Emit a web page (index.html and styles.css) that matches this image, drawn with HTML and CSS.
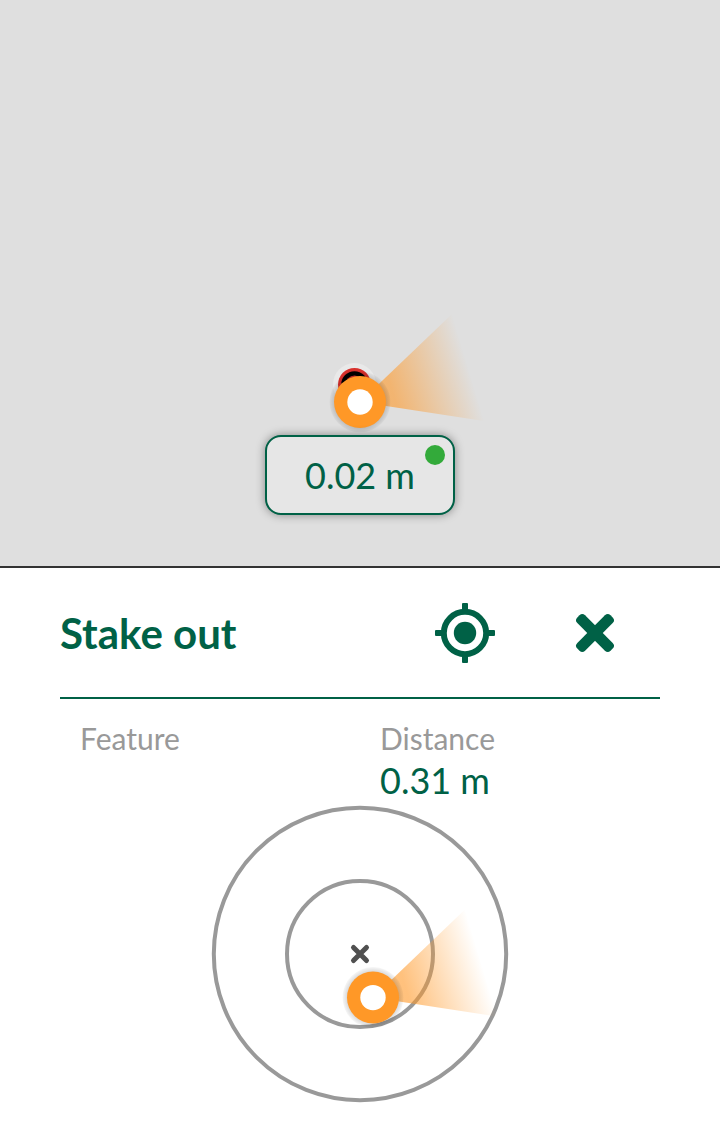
FILE: index.html
```html
<!DOCTYPE html>
<html lang="en">
<head>
<meta charset="utf-8">
<meta name="viewport" content="width=device-width, initial-scale=1">
<title>Stake out</title>
<link rel="stylesheet" href="styles.css">
</head>
<body>
<svg class="defs" aria-hidden="true">
  <defs>
    <linearGradient id="beam-fade" gradientUnits="userSpaceOnUse" x1="0" y1="0" x2="109" y2="-33">
      <stop offset="0.3" stop-color="#ff9827" stop-opacity="0.6"/>
      <stop offset="1" stop-color="#ff9827" stop-opacity="0"/>
    </linearGradient>
    <radialGradient id="marker-shadow">
      <stop offset="0.8" stop-color="#000" stop-opacity="0.18"/>
      <stop offset="1" stop-color="#000" stop-opacity="0.03"/>
    </radialGradient>
    <g id="position-marker">
      <path d="M0 0L92-88L124 19Z" fill="url(#beam-fade)"/>
      <circle r="30.5" fill="url(#marker-shadow)"/>
      <circle r="26" fill="#ff9827"/>
      <circle r="12.7" fill="#fff"/>
    </g>
  </defs>
</svg>
<main class="app">
  <section class="map" aria-label="Map">
    <svg class="map-position" viewBox="-130 -130 260 260" aria-hidden="true">
      <circle cx="-5.5" cy="-17.5" r="21.5" fill="#e9e9e9"/>
      <circle cx="-5.5" cy="-17.5" r="16.5" fill="#d8302c"/>
      <circle cx="-5.5" cy="-17.5" r="13.3" fill="#000"/>
      <circle cx="-5.5" cy="-17.5" r="9" fill="#d8302c"/>
      <use href="#position-marker"/>
    </svg>
    <div class="accuracy">
      <span class="accuracy-value">0.02 m</span>
      <span class="accuracy-dot"></span>
    </div>
  </section>
  <section class="panel">
    <header class="panel-header">
      <h1 class="title">Stake out</h1>
      <button class="icon-button" type="button" aria-label="Centre on position">
        <svg class="icon" viewBox="0 0 60 60" aria-hidden="true">
          <circle cx="30" cy="30" r="21.2" fill="none" stroke="#006146" stroke-width="6"/>
          <circle cx="30" cy="30" r="11.2" fill="#006146"/>
          <g fill="#006146">
            <rect x="27" y="0" width="6" height="8" rx="1"/>
            <rect x="27" y="52" width="6" height="8" rx="1"/>
            <rect x="0" y="27" width="8" height="6" rx="1"/>
            <rect x="52" y="27" width="8" height="6" rx="1"/>
          </g>
        </svg>
      </button>
      <button class="icon-button" type="button" aria-label="Close">
        <svg class="icon" viewBox="0 0 60 60" aria-hidden="true">
          <g fill="#006146" transform="rotate(45 30 30)">
            <rect x="6.500" y="24.500" width="47" height="11" rx="4"/>
            <rect x="24.500" y="6.500" width="11" height="47" rx="4"/>
          </g>
        </svg>
      </button>
    </header>
    <dl class="details">
      <div class="detail">
        <dt class="detail-label">Feature</dt>
        <dd class="detail-value"></dd>
      </div>
      <div class="detail">
        <dt class="detail-label">Distance</dt>
        <dd class="detail-value">0.31 m</dd>
      </div>
    </dl>
    <svg class="radar" viewBox="0 0 300 300" role="img" aria-label="Position relative to the target">
      <g fill="none" stroke="#999" stroke-width="4">
        <circle cx="150" cy="150" r="146.2"/>
        <circle cx="150" cy="150" r="73"/>
      </g>
      <path d="M143.500 143.500L156.500 156.500M156.500 143.500L143.500 156.500" stroke="#505050" stroke-width="5" stroke-linecap="round"/>
      <use href="#position-marker" x="163" y="193.600"/>
    </svg>
  </section>
</main>
</body>
</html>
```
FILE: styles.css
```css
* {
  box-sizing: border-box;
}

body {
  margin: 0;
  background: #fff;
  color: #006146;
  font-family: Lato, "Open Sans", sans-serif;
}

.defs {
  position: absolute;
  width: 0;
  height: 0;
}

.app {
  display: flex;
  flex-direction: column;
  min-height: 100vh;
}

.map {
  flex: 1;
  display: flex;
  flex-direction: column;
  align-items: center;
  justify-content: flex-end;
  padding-bottom: 51px;
  border-bottom: 2px solid #333;
  background: #dfdfdf;
}

.map-position {
  width: 260px;
  height: 260px;
  margin-bottom: -97px;
}

.accuracy {
  position: relative;
  display: flex;
  align-items: center;
  justify-content: center;
  width: 190px;
  height: 80px;
  border: 2px solid #006146;
  border-radius: 16px;
  background: #e6e6e6;
  box-shadow: 0 0 10px rgba(0, 0, 0, 0.4);
}

.accuracy-value {
  font-size: 36px;
  line-height: 44px;
}

.accuracy-dot {
  position: absolute;
  top: 8px;
  right: 8px;
  width: 20px;
  height: 20px;
  border-radius: 50%;
  background: #33aa3a;
}

.panel {
  display: flex;
  flex-direction: column;
  padding: 0 60px 26px;
}

.panel-header {
  display: flex;
  align-items: center;
  height: 131px;
  border-bottom: 2px solid #006146;
}

.title {
  flex: 1;
  margin: 0;
  font-size: 42px;
  line-height: 52px;
  font-weight: 700;
}

.icon-button {
  display: flex;
  align-items: center;
  justify-content: center;
  width: 130px;
  height: 80px;
  padding: 0;
  border: 0;
  background: none;
  cursor: pointer;
}

.icon {
  width: 60px;
  height: 60px;
}

.details {
  display: grid;
  grid-template-columns: 1fr 1fr;
  margin: 0;
  padding: 19px 0 2px 20px;
  column-gap: 20px;
}

.detail-label {
  color: #999;
  font-size: 30px;
  line-height: 40px;
}

.detail-value {
  margin: 0;
  font-size: 36px;
  line-height: 44px;
}

.radar {
  align-self: center;
  width: 300px;
  height: 300px;
  overflow: visible;
}
```
